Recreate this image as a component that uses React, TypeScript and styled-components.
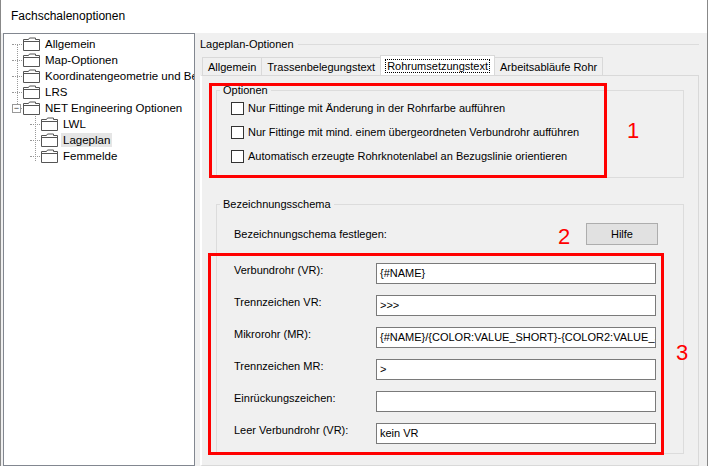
import React from "react";
import styled, { createGlobalStyle } from "styled-components";

const G = createGlobalStyle`
  html,body{margin:0;padding:0;background:#fff;}
  body{font-family:"Liberation Sans",Arial,sans-serif;font-size:11px;color:#000;}
  *{box-sizing:border-box;}
`;

const Win = styled.div`width:708px;height:466px;border-left:1px solid #888;border-right:1px solid #888;display:flex;flex-direction:column;overflow:hidden;`;
const Title = styled.div`height:33px;background:#fff;padding:9px 0 0 10px;font-size:12px;`;
const Body = styled.div`flex:1;background:#f0f0f0;display:flex;padding:0 0 0 2px;`;
const Tree = styled.div`width:192px;flex-shrink:0;background:#fff;border:1px solid #828790;padding:2px 0 0 0;position:relative;overflow:hidden;`;
const Node = styled.div<{ $d: number; $sel?: boolean }>`
  height:16px;display:flex;align-items:center;padding-left:${p => 8 + p.$d * 18}px;white-space:nowrap;
  & > span{padding:1px 2px;flex-shrink:0;font-size:11.5px;background:${p => (p.$sel ? "#e5e5e5" : "transparent")};}
  & > svg{flex-shrink:0;}
`;
const Dots = styled.i`display:inline-block;flex-shrink:0;width:10px;border-top:1px dotted #999;margin-right:1px;`;
const Exp = styled.span`position:absolute;left:8px;width:9px;height:9px;border:1px solid #999;background:#fff;font-size:9px;line-height:6px;text-align:center;color:#333;z-index:1;`;
const VLine = styled.div<{ $x: number; $t: number; $h: number }>`position:absolute;left:${p => p.$x}px;top:${p => p.$t}px;height:${p => p.$h}px;border-left:1px dotted #999;`;

const Folder = () => (
  <svg width="17" height="14" viewBox="0 0 17 14" style={{ marginRight: 3 }}>
    <path d="M0.5 2.5h5l1-1.5h6v1.5h4v11h-16z" fill="#fff" stroke="#555" />
    <path d="M0.5 4.5h16" stroke="#555" />
  </svg>
);

const Right = styled.div`flex:1;padding:4px 8px 0 5px;display:flex;flex-direction:column;`;
const OuterLegend = styled.div`display:flex;align-items:center;gap:4px;height:14px;&::after{content:"";flex:1;border-top:1px solid #dcdcdc;}`;
const Tabs = styled.div`display:flex;margin:5px 0 0 3px;height:19px;align-items:flex-end;`;
const Tab = styled.div<{ $a?: boolean }>`
  height:${p => (p.$a ? 20 : 18)}px;padding:0 5px;display:flex;align-items:center;border:1px solid #d9d9d9;border-bottom:none;
  background:${p => (p.$a ? "#fff" : "#f0f0f0")};margin-left:-1px;position:relative;z-index:${p => (p.$a ? 1 : 0)};
  & > span{${p => (p.$a ? "outline:1px dotted #000;padding:0 1px;" : "")}}
`;
const Page = styled.div`flex:1;border:1px solid #d9d9d9;border-left:2px solid #fff;padding:8px 14px 0 14px;position:relative;display:flex;flex-direction:column;gap:20px;`;
const Group = styled.fieldset<{ $h: number }>`margin:0;border:1px solid #dcdcdc;padding:0 0 0 14px;height:${p => p.$h}px;position:relative;`;
const Legend = styled.legend`padding:0 3px;margin-left:-11px;font-size:11px;`;
const CheckRow = styled.label`display:flex;align-items:center;gap:4px;height:24px;`;
const Box = styled.span`width:13px;height:13px;border:1px solid #333;background:#fff;`;
const RedBox = styled.div<{ $l: number; $t: number; $w: number; $h: number }>`position:absolute;left:${p => p.$l}px;top:${p => p.$t}px;width:${p => p.$w}px;height:${p => p.$h}px;border:3px solid #f00;pointer-events:none;`;
const Num = styled.div<{ $l: number; $t: number }>`position:absolute;left:${p => p.$l}px;top:${p => p.$t}px;color:#f00;font-size:22px;`;
const HeadRow = styled.div`display:flex;align-items:center;justify-content:space-between;margin:13px 25px 12px 3px;height:22px;`;
const Btn = styled.div`width:72px;height:22px;border:1px solid #adadad;background:#e1e1e1;display:flex;align-items:center;justify-content:center;`;
const FRow = styled.div`display:flex;align-items:center;height:32px;padding-left:3px;`;
const FLabel = styled.div`width:142px;margin-top:-7px;`;
const Input = styled.div`width:280px;height:21px;border:1px solid #7a7a7a;background:#fff;padding:3px 3px;white-space:nowrap;overflow:hidden;`;

const fields: [string, string][] = [
  ["Verbundrohr (VR):", "{#NAME}"],
  ["Trennzeichen VR:", ">>>"],
  ["Mikrorohr (MR):", "{#NAME}/{COLOR:VALUE_SHORT}-{COLOR2:VALUE_SHORT}"],
  ["Trennzeichen MR:", ">"],
  ["Einrückungszeichen:", ""],
  ["Leer Verbundrohr (VR):", "kein VR"],
];

export default function App() {
  return (
    <Win>
      <G />
      <Title>Fachschalenoptionen</Title>
      <Body>
        <Tree>
          <VLine $x={13} $t={10} $h={64} />
          <VLine $x={31} $t={82} $h={45} />
          <Exp style={{ top: 70 }}>−</Exp>
          {["Allgemein", "Map-Optionen", "Koordinatengeometrie und Bemaßung", "LRS", "NET Engineering Optionen"].map(t => (
            <Node $d={0} key={t}><Dots /><Folder /><span>{t}</span></Node>
          ))}
          {["LWL", "Lageplan", "Femmelde"].map(t => (
            <Node $d={1} key={t} $sel={t === "Lageplan"}><Dots /><Folder /><span>{t}</span></Node>
          ))}
        </Tree>
        <Right>
          <OuterLegend>Lageplan-Optionen</OuterLegend>
          <Tabs>
            <Tab><span>Allgemein</span></Tab>
            <Tab><span>Trassenbelegungstext</span></Tab>
            <Tab $a><span>Rohrumsetzungstext</span></Tab>
            <Tab><span>Arbeitsabläufe Rohr</span></Tab>
          </Tabs>
          <Page>
            <Group $h={94}>
              <Legend>Optionen</Legend>
              <CheckRow><Box />Nur Fittinge mit Änderung in der Rohrfarbe aufführen</CheckRow>
              <CheckRow><Box />Nur Fittinge mit mind. einem übergeordneten Verbundrohr aufführen</CheckRow>
              <CheckRow><Box />Automatisch erzeugte Rohrknotenlabel an Bezugslinie orientieren</CheckRow>
            </Group>
            <Group $h={256}>
              <Legend>Bezeichnungsschema</Legend>
              <HeadRow>Bezeichnungschema festlegen:<Btn>Hilfe</Btn></HeadRow>
              {fields.map(([l, v]) => (
                <FRow key={l}><FLabel>{l}</FLabel><Input>{v}</Input></FRow>
              ))}
            </Group>
            <RedBox $l={7} $t={7} $w={398} $h={95} />
            <Num $l={425} $t={42}>1</Num>
            <Num $l={356} $t={148}>2</Num>
            <RedBox $l={6} $t={177} $w={456} $h={202} />
            <Num $l={474} $t={264}>3</Num>
          </Page>
        </Right>
      </Body>
    </Win>
  );
}
